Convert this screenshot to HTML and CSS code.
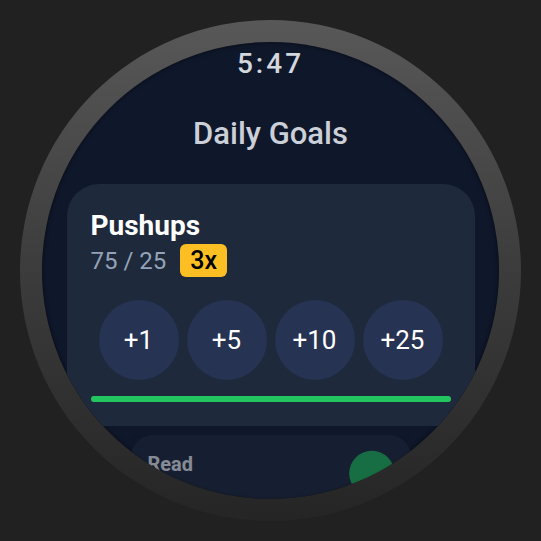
FILE: index.html
```html
<!DOCTYPE html>
<html lang="en">
<head>
    <meta charset="UTF-8">
    <meta name="viewport" content="width=device-width, initial-scale=1.0">
    <title>Daily Goals</title>
    <link rel="stylesheet" href="styles.css">
</head>
<body>
    <div class="watch">
        <div class="screen">
            <div class="time">5:47</div>
            <h1 class="title">Daily Goals</h1>

            <div class="goal-list">
                <div class="goal-card">
                    <div class="goal-name">Pushups</div>
                    <div class="goal-meta">
                        <span class="goal-count">75 / 25</span>
                        <span class="streak">3x</span>
                    </div>
                    <div class="increments">
                        <button class="inc-btn">+1</button>
                        <button class="inc-btn">+5</button>
                        <button class="inc-btn">+10</button>
                        <button class="inc-btn">+25</button>
                    </div>
                    <div class="progress">
                        <div class="progress-fill" style="width: 100%;"></div>
                    </div>
                </div>

                <div class="goal-card goal-card--check faded">
                    <div class="goal-name">Read</div>
                    <button class="check-btn">
                        <svg class="check-icon" width="26" height="26" viewBox="0 0 24 24" fill="none" stroke="#0f172a" stroke-width="3" stroke-linecap="round" stroke-linejoin="round">
                            <path d="M5 13l4 4L19 7"/>
                        </svg>
                    </button>
                </div>
            </div>
        </div>
    </div>
</body>
</html>
```

FILE: styles.css
```css
body {
    margin: 0;
    width: 541px;
    height: 541px;
    background: #212121;
    font-family: Roboto, "Liberation Sans", sans-serif;
    display: flex;
    align-items: center;
    justify-content: center;
}
.watch {
    padding: 22px;
    border-radius: 50%;
    background: linear-gradient(180deg, #585858 0%, #3c3c3c 50%, #252525 100%);
}
.screen {
    width: 457px;
    height: 457px;
    border-radius: 50%;
    overflow: hidden;
    background: #0f172a;
    box-shadow: inset 0 0 4px rgba(0,0,0,0.6);
    display: flex;
    flex-direction: column;
    align-items: center;
}
.time {
    margin-top: 6px;
    font-size: 28px;
    line-height: 32px;
    font-weight: 500;
    letter-spacing: 3px;
    color: #d4d7dd;
}
.title {
    margin: 36px 0 0;
    font-size: 31px;
    line-height: 36px;
    font-weight: 500;
    color: #cbd0d8;
}
.goal-list {
    margin-top: 32px;
    display: flex;
    flex-direction: column;
    align-items: center;
    gap: 9px;
}
.goal-card {
    width: 408px;
    box-sizing: border-box;
    padding: 24px;
    background: #1e293b;
    border-radius: 32px;
}
.goal-name {
    font-size: 28px;
    line-height: 36px;
    font-weight: 700;
    color: #ffffff;
}
.goal-meta {
    display: flex;
    align-items: center;
    gap: 14px;
}
.goal-count {
    font-size: 24px;
    color: #94a3b8;
}
.streak {
    background: #fbbf24;
    color: #000;
    font-size: 25px;
    font-weight: 500;
    line-height: 33px;
    padding: 0 10px;
    border-radius: 6px;
}
.increments {
    margin-top: 23px;
    display: flex;
    justify-content: center;
    gap: 8px;
}
.inc-btn {
    width: 80px;
    height: 80px;
    border: none;
    border-radius: 50%;
    background: #263352;
    color: #fff;
    font-family: inherit;
    font-size: 26px;
    font-weight: 400;
    padding: 0;
}
.progress {
    margin-top: 16px;
    height: 6px;
    border-radius: 3px;
    background: #334155;
}
.progress-fill {
    height: 100%;
    border-radius: 3px;
    background: #22c55e;
}
.goal-card--check {
    display: flex;
    justify-content: space-between;
    align-items: flex-start;
    padding-top: 23px;
}
.goal-card--check .goal-name {
    font-size: 29px;
    margin-top: 1px;
}
.check-btn {
    width: 66px;
    height: 66px;
    border: none;
    border-radius: 50%;
    background: #22c55e;
    display: flex;
    align-items: center;
    justify-content: center;
    padding: 0;
}
.check-icon {
    margin-top: 16px;
}
.faded {
    opacity: 0.5;
    transform: scale(0.686);
    transform-origin: top center;
}
```
